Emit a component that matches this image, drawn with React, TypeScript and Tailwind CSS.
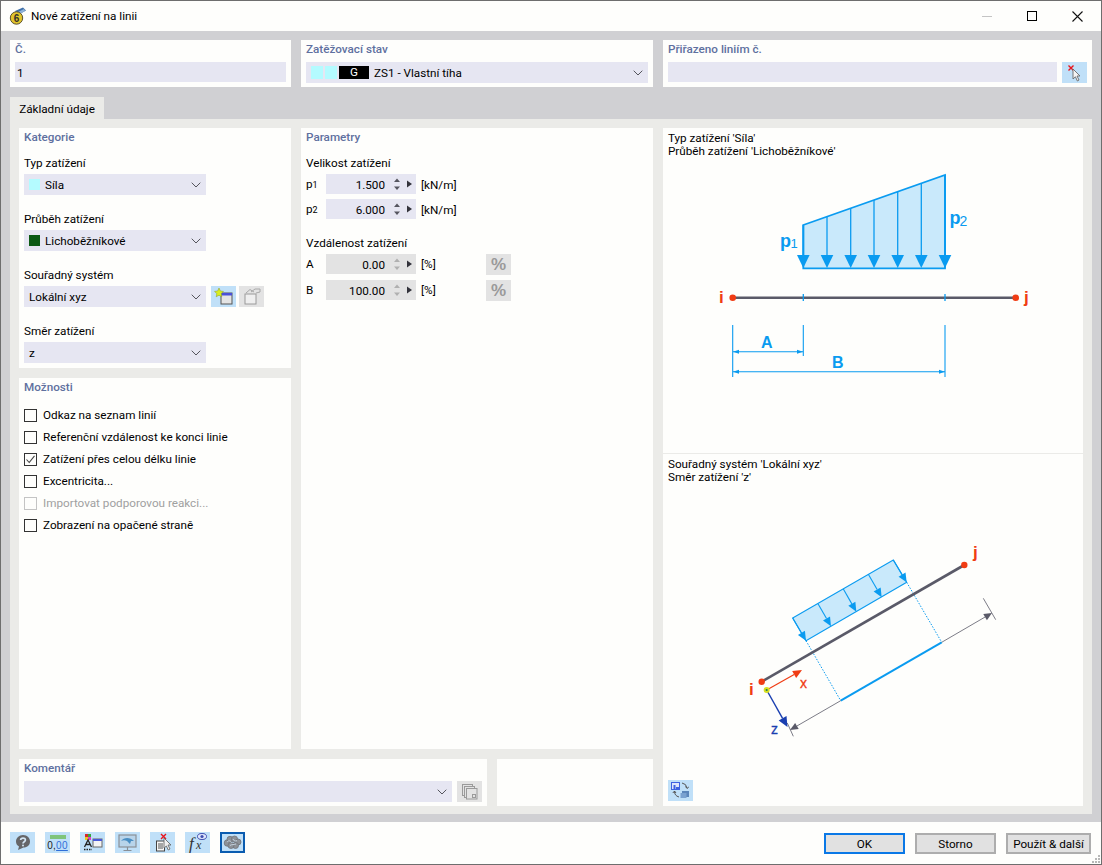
import React from "react";

const Chevron = () => (
  <svg width="10" height="6" viewBox="0 0 10 6" className="shrink-0">
    <polyline points="0.7,0.7 5,5 9.3,0.7" fill="none" stroke="#55555d" strokeWidth="1" />
  </svg>
);

const T = ({ children, className = "" }: { children: React.ReactNode; className?: string }) => (
  <span className={`pt-[2px] ${className}`}>{children}</span>
);

function Select({ w, children }: { w: string; children?: React.ReactNode }) {
  return (
    <div className={`${w} h-[21px] bg-[#e6e6f2] flex items-center pl-[5px] pr-[5px] text-black`}>
      <div className="flex items-center flex-1 min-w-0">{children}</div>
      <Chevron />
    </div>
  );
}

const Head = ({ children }: { children: React.ReactNode }) => (
  <div className="h-[18px] flex items-center pl-[5px] pt-[1px] font-medium text-[#5f709f]">{children}</div>
);

const Label = ({ children, className = "" }: { children: React.ReactNode; className?: string }) => (
  <div className={`h-[16px] flex items-center pt-[1px] text-black ${className}`}>{children}</div>
);

function Spin({ value, disabled }: { value: string; disabled?: boolean }) {
  const c = disabled ? "#b0b0b0" : "#55555f";
  return (
    <div className={`w-[90px] h-[20px] flex items-center ${disabled ? "bg-[#e3e3e3]" : "bg-[#e6e6f2]"}`}>
      <div className="w-[59px] pt-[2px] text-right text-black">{value}</div>
      <svg width="31" height="20" viewBox="0 0 31 20" className="shrink-0">
        <polygon points="12,4.5 15,8 9,8" fill={c} />
        <polygon points="12,16 15,12.5 9,12.5" fill={c} />
        <polygon points="22,6.5 22,13.5 27,10" fill="#33333b" />
      </svg>
    </div>
  );
}

const Pct = () => (
  <div className="w-[25px] h-[21px] bg-[#e3e3e3] flex items-center justify-center text-[#9a9a9a] text-[17px] font-bold leading-none font-['Liberation_Sans',sans-serif]">
    %
  </div>
);

function Check({ label, checked, disabled }: { label: string; checked?: boolean; disabled?: boolean }) {
  return (
    <div className="h-[22px] flex items-center">
      <div className={`w-[13px] h-[13px] border bg-[#fefefc] flex items-center justify-center ${disabled ? "border-[#c4c4c4]" : "border-[#333333]"}`}>
        {checked && (
          <svg width="11" height="11" viewBox="0 0 11 11">
            <polyline points="1.5,5.5 4.2,8.5 9.5,1.8" fill="none" stroke="#444" strokeWidth="1.1" />
          </svg>
        )}
      </div>
      <span className={`ml-[6px] pt-[1px] ${disabled ? "text-[#a0a0a0]" : "text-black"}`}>{label}</span>
    </div>
  );
}

const Tool = ({ children, active }: { children: React.ReactNode; active?: boolean }) => (
  <div className={`w-[25px] h-[21px] bg-[#c0e0f8] flex items-center justify-center ${active ? "border-2 border-[#0a5cb0]" : ""}`}>
    {children}
  </div>
);

const Btn = ({ children, primary }: { children: React.ReactNode; primary?: boolean }) => (
  <div className={`h-[21px] bg-[#e1e1e1] border-2 flex items-center justify-center pt-[1px] text-black ${primary ? "w-[81px] border-[#0a78e6]" : "border-[#adadad]"}`}>
    {children}
  </div>
);

const BLUE = "#0a9bf0";
const FILL = "#c9e9fb";
const RED = "#f03c14";
const GR = "#5a5a68";
const LBL = { fontFamily: "'Liberation Sans', sans-serif", fontWeight: 700 } as const;
const REG = { fontFamily: "'Liberation Sans', sans-serif" } as const;

function TopDiagram() {
  const xs = [803.3, 827, 850.7, 874, 897.7, 921.3, 945];
  const topY = (x: number) => 225 - ((x - 803.3) / 141.7) * 50;
  return (
    <svg width="420" height="293" viewBox="663 160 420 293">
      <polygon points="803.3,225 945,175 945,268.3 803.3,268.3" fill={FILL} stroke={BLUE} strokeWidth="1.8" />
      {xs.map((x) => (
        <g key={x}>
          <line x1={x} y1={topY(x)} x2={x} y2={257} stroke={BLUE} strokeWidth={x === 803.3 || x === 945 ? 1.8 : 1.3} />
          <polygon points={`${x - 6.3},255 ${x + 6.3},255 ${x},268`} fill={BLUE} />
        </g>
      ))}
      <text x="780" y="247" fontSize="18" fill={BLUE} style={LBL}>p</text>
      <text x="790.5" y="248" fontSize="13" fill={BLUE} style={REG}>1</text>
      <text x="949.5" y="224" fontSize="18" fill={BLUE} style={LBL}>p</text>
      <text x="959.5" y="226" fontSize="14" fill={BLUE} style={REG}>2</text>

      <line x1="732.7" y1="297.7" x2="1015.7" y2="297.7" stroke={GR} strokeWidth="2.4" />
      <line x1="803.3" y1="294" x2="803.3" y2="301" stroke={BLUE} strokeWidth="1.3" />
      <line x1="945" y1="294" x2="945" y2="301" stroke={BLUE} strokeWidth="1.3" />
      <circle cx="732.7" cy="297.7" r="3.3" fill={RED} />
      <circle cx="1015.7" cy="297.7" r="3.3" fill={RED} />
      <text x="719" y="303" fontSize="17" fill={RED} style={LBL}>i</text>
      <text x="1024" y="303" fontSize="17" fill={RED} style={LBL}>j</text>

      <g stroke={BLUE} strokeWidth="1.1">
        <line x1="732.7" y1="325" x2="732.7" y2="377" />
        <line x1="803.3" y1="325" x2="803.3" y2="356" />
        <line x1="945" y1="325" x2="945" y2="377" />
        <line x1="733" y1="351.7" x2="803" y2="351.7" />
        <line x1="733" y1="371.7" x2="945" y2="371.7" />
      </g>
      <g fill={BLUE}>
        <polygon points="733,351.7 739,349.7 739,353.7" />
        <polygon points="803,351.7 797,349.7 797,353.7" />
        <polygon points="733,371.7 739,369.7 739,373.7" />
        <polygon points="945,371.7 939,369.7 939,373.7" />
      </g>
      <text x="761" y="348" fontSize="16" fill={BLUE} style={LBL}>A</text>
      <text x="832" y="368" fontSize="16" fill={BLUE} style={LBL}>B</text>
    </svg>
  );
}

function Arrow({ x1, y1, x2, y2, c, w, s = 8 }: { x1: number; y1: number; x2: number; y2: number; c: string; w: number; s?: number }) {
  const a = Math.atan2(y2 - y1, x2 - x1);
  const bx = x2 - Math.cos(a) * s;
  const by = y2 - Math.sin(a) * s;
  const px = -Math.sin(a) * s * 0.45;
  const py = Math.cos(a) * s * 0.45;
  return (
    <g>
      <line x1={x1} y1={y1} x2={bx} y2={by} stroke={c} strokeWidth={w} />
      <polygon points={`${x2},${y2} ${bx + px},${by + py} ${bx - px},${by - py}`} fill={c} />
    </g>
  );
}

function BottomDiagram() {
  const P = (zx: number, zy: number) => [730 + zx / 3, 540 + zy / 3] as const;
  const arrows = [
    [188, 237, 228, 305],
    [264, 194, 303, 262],
    [340, 150, 379, 218],
    [415, 106, 455, 175],
    [490, 63, 530, 130],
  ];
  const [ox, oy] = P(110, 453);
  return (
    <svg width="420" height="285" viewBox="663 490 420 285">
      <polygon points="792.7,619 893.3,561 906.7,583.3 806,641.7" fill={FILL} stroke={BLUE} strokeWidth="1.1" />
      {arrows.map((a) => {
        const [x1, y1] = P(a[0], a[1]);
        const [x2, y2] = P(a[2], a[3]);
        return <Arrow key={a[0]} x1={x1} y1={y1} x2={x2} y2={y2} c={BLUE} w={1.1} s={9} />;
      })}
      <line x1="806" y1="641.7" x2="840.7" y2="701.7" stroke={BLUE} strokeWidth="1" strokeDasharray="1.5 1.5" />
      <line x1="906.7" y1="583.3" x2="941.7" y2="643.3" stroke={BLUE} strokeWidth="1" strokeDasharray="1.5 1.5" />
      <line x1="761.7" y1="682.7" x2="964.3" y2="566" stroke={GR} strokeWidth="2.6" />
      <circle cx="761.7" cy="682.7" r="3.2" fill={RED} />
      <circle cx="964.3" cy="566" r="3.2" fill={RED} />
      <line x1="840.7" y1="701.7" x2="941.7" y2="643.3" stroke={BLUE} strokeWidth="2" />
      <Arrow x1={840.7} y1={701.7} x2={790} y2={731} c={GR} w={0.8} s={8} />
      <Arrow x1={941.7} y1={643.3} x2={992} y2={614} c={GR} w={0.8} s={8} />
      <line x1="983.3" y1="599.3" x2="995.7" y2="620.7" stroke={GR} strokeWidth="0.8" />
      <line x1="787.3" y1="724" x2="793.3" y2="737.3" stroke={GR} strokeWidth="0.8" />
      <Arrow x1={ox} y1={oy} x2={802} y2={671} c={RED} w={1.2} s={9} />
      <Arrow x1={ox} y1={oy} x2={787.5} y2={728} c="#1a3fb0" w={1.4} s={10} />
      <circle cx={ox} cy={oy} r="3" fill="#d8e020" />
      <circle cx={ox} cy={oy} r="1.1" fill="#1f7f4f" />
      <text x="749" y="696" fontSize="17" fill={RED} style={LBL}>i</text>
      <text x="973" y="559" fontSize="17" fill={RED} style={LBL}>j</text>
      <text x="800" y="689" fontSize="14" fill={RED} style={{ ...REG, fontWeight: 400 }} stroke={RED} strokeWidth="0.3">x</text>
      <text x="771" y="735" fontSize="14" fill="#1a3fb0" style={{ ...REG, fontWeight: 400 }} stroke="#1a3fb0" strokeWidth="0.3">z</text>
    </svg>
  );
}

export default function App() {
  return (
    <div className="w-[1102px] h-[865px] box-border border border-[#6e6e6e] bg-[#fefefc] flex flex-col text-[11.7px] leading-[13px] font-['Roboto','Noto_Sans',sans-serif] overflow-hidden">
      {/* title bar */}
      <div className="h-[30px] flex items-center pl-[8px] pr-[18px] shrink-0">
        <svg width="18" height="18" viewBox="0 0 18 18" className="shrink-0">
          <polygon points="6,4 14,0.5 17,3.5 9,8" fill="#3f6fa8" />
          <polygon points="7,6 15,2 16,4 9,8" fill="#8fb2d8" />
          <circle cx="7.5" cy="11" r="6.2" fill="#e2c52c" stroke="#5b5230" strokeWidth="1" />
          <text x="7.5" y="14.5" fontSize="10" fontWeight="700" textAnchor="middle" fill="#33302a" style={REG}>6</text>
        </svg>
        <span className="ml-[4px] pt-[1px] text-black">Nové zatížení na linii</span>
        <div className="ml-auto flex items-center gap-[35px]">
          <div className="w-[10px] h-[1px] bg-[#c4c4c4]" />
          <div className="w-[10px] h-[10px] border border-black" />
          <svg width="11" height="11" viewBox="0 0 11 11">
            <path d="M0.5 0.5 L10.5 10.5 M10.5 0.5 L0.5 10.5" stroke="#111" strokeWidth="1.1" />
          </svg>
        </div>
      </div>

      {/* main */}
      <div className="flex-1 bg-[#d0d0d3] px-[9px] pt-[9px] pb-[8px] flex flex-col">
        <div className="flex gap-[10px] h-[47px] shrink-0">
          <div className="w-[281px] bg-[#fefefc] px-[5px]">
            <div className="h-[18px] flex items-center pt-[1px] font-medium text-[#5f709f]">Č.</div>
            <div className="mt-[4px] h-[20px] bg-[#e6e6f2] flex items-center pl-[2px] pt-[2px] text-black">1</div>
          </div>
          <div className="w-[352px] bg-[#fefefc] px-[5px]">
            <div className="h-[18px] flex items-center pt-[1px] font-medium text-[#5f709f]">Zatěžovací stav</div>
            <div className="mt-[4px]">
              <Select w="w-[342px]">
                <span className="w-[12px] h-[13px] bg-[#b4fbff]" />
                <span className="ml-[2px] w-[12px] h-[13px] bg-[#b4fbff]" />
                <span className="ml-[2px] w-[30px] h-[13px] bg-black text-white flex items-center justify-center">G</span>
                <T className="ml-[5px]">ZS1 - Vlastní tíha</T>
              </Select>
            </div>
          </div>
          <div className="w-[429px] bg-[#fefefc] px-[5px]">
            <div className="h-[18px] flex items-center pt-[1px] font-medium text-[#5f709f]">Přiřazeno liniím č.</div>
            <div className="mt-[4px] flex gap-[5px] items-start">
              <div className="w-[389px] h-[20px] bg-[#e6e6f2]" />
              <div className="w-[25px] h-[21px] bg-[#c0e0f8] flex items-center justify-center">
                <svg width="20" height="18" viewBox="0 0 20 18">
                  <path d="M3.5 1.5 L8.5 6.5 M8.5 1.5 L3.5 6.5" stroke="#e8141c" strokeWidth="1.4" />
                  <polygon points="8,5 8,15 10.4,12.8 12.4,17 14,16 12,12 15,12" fill="#f4f4f4" stroke="#6a6a6a" strokeWidth="0.9" />
                </svg>
              </div>
            </div>
          </div>
        </div>

        <div className="mt-[10px] w-[94px] h-[22px] bg-[#ebebe8] flex items-center justify-center pt-[2px] text-black shrink-0">Základní údaje</div>

        <div className="flex-1 bg-[#ebebe8] pl-[9px] pr-[9px] pt-[9px] pb-[8px] flex gap-[10px] min-h-0">
          <div className="w-[634px] flex flex-col gap-[10px]">
            <div className="h-[621px] flex gap-[10px]">
              <div className="w-[272px] flex flex-col gap-[10px]">
                <div className="h-[240px] bg-[#fefefc]">
                  <Head>Kategorie</Head>
                  <div className="pl-[5px] pt-[9px]">
                    <Label>Typ zatížení</Label>
                    <div className="mt-[3px]">
                      <Select w="w-[182px]">
                        <span className="w-[11px] h-[11px] bg-[#b4fbff]" />
                        <T className="ml-[5px]">Síla</T>
                      </Select>
                    </div>
                    <Label className="mt-[16px]">Průběh zatížení</Label>
                    <div className="mt-[3px]">
                      <Select w="w-[182px]">
                        <span className="w-[11px] h-[11px] bg-[#0c5a14]" />
                        <T className="ml-[5px]">Lichoběžníkové</T>
                      </Select>
                    </div>
                    <Label className="mt-[16px]">Souřadný systém</Label>
                    <div className="mt-[3px] flex items-center">
                      <Select w="w-[182px]"><T>Lokální xyz</T></Select>
                      <div className="ml-[5px] w-[25px] h-[21px] bg-[#c0e0f8] flex items-center justify-center">
                        <svg width="21" height="19" viewBox="0 0 21 19">
                          <rect x="8" y="6" width="11" height="11" fill="#e4e4e4" stroke="#555" />
                          <rect x="8" y="6" width="11" height="2.5" fill="#4a50d8" />
                          <polygon points="6,1 7.4,4 10.5,4.4 8.2,6.6 8.8,9.8 6,8.2 3.2,9.8 3.8,6.6 1.5,4.4 4.6,4" fill="#d8ee20" stroke="#8a9a20" strokeWidth="0.5" />
                        </svg>
                      </div>
                      <div className="ml-[3px] w-[25px] h-[21px] bg-[#e3e3e3] flex items-center justify-center">
                        <svg width="21" height="19" viewBox="0 0 21 19">
                          <rect x="4" y="7" width="11" height="10" fill="#efefef" stroke="#9a9a9a" />
                          <path d="M5 6 L9 2.5 L13 5 M10 5 L14 2 L19 2 L19 5 L15 6" fill="none" stroke="#a8a8a8" strokeWidth="1" />
                        </svg>
                      </div>
                    </div>
                    <Label className="mt-[16px]">Směr zatížení</Label>
                    <div className="mt-[3px]">
                      <Select w="w-[182px]"><T>z</T></Select>
                    </div>
                  </div>
                </div>
                <div className="flex-1 bg-[#fefefc]">
                  <Head>Možnosti</Head>
                  <div className="pl-[5px] mt-[8px]">
                    <Check label="Odkaz na seznam linií" />
                    <Check label="Referenční vzdálenost ke konci linie" />
                    <Check label="Zatížení přes celou délku linie" checked />
                    <Check label="Excentricita..." />
                    <Check label="Importovat podporovou reakci..." disabled />
                    <Check label="Zobrazení na opačené straně" />
                  </div>
                </div>
              </div>

              <div className="w-[352px] bg-[#fefefc]">
                <Head>Parametry</Head>
                <div className="pl-[5px] pt-[9px]">
                  <Label>Velikost zatížení</Label>
                  <div className="mt-[3px] flex items-center">
                    <span className="w-[20px] pt-[2px] text-black">p<span className="text-[9px]">1</span></span>
                    <Spin value="1.500" />
                    <span className="ml-[5px] pt-[2px] text-black">[kN/m]</span>
                  </div>
                  <div className="mt-[5px] flex items-center">
                    <span className="w-[20px] pt-[2px] text-black">p<span className="text-[9px]">2</span></span>
                    <Spin value="6.000" />
                    <span className="ml-[5px] pt-[2px] text-black">[kN/m]</span>
                  </div>
                  <Label className="mt-[16px]">Vzdálenost zatížení</Label>
                  <div className="mt-[3px] flex items-start">
                    <span className="w-[20px] h-[20px] flex items-center pt-[1px] text-black">A</span>
                    <Spin value="0.00" disabled />
                    <span className="ml-[5px] w-[65px] h-[20px] flex items-center pt-[1px] text-black">[%]</span>
                    <Pct />
                  </div>
                  <div className="mt-[5px] flex items-start">
                    <span className="w-[20px] h-[20px] flex items-center pt-[1px] text-black">B</span>
                    <Spin value="100.00" disabled />
                    <span className="ml-[5px] w-[65px] h-[20px] flex items-center pt-[1px] text-black">[%]</span>
                    <Pct />
                  </div>
                </div>
              </div>
            </div>

            <div className="flex-1 flex gap-[10px]">
              <div className="w-[468px] bg-[#fefefc]">
                <div className="h-[18px] flex items-center pl-[5px] pt-[1px] font-medium text-[#5f709f]">Komentář</div>
                <div className="mt-[4px] pl-[5px] flex items-center gap-[5px]">
                  <Select w="w-[428px]" />
                  <div className="w-[25px] h-[21px] bg-[#e3e3e3] flex items-center justify-center">
                    <svg width="17" height="17" viewBox="0 0 17 17">
                      <rect x="1.5" y="1.5" width="10" height="11" fill="none" stroke="#9a9a9a" />
                      <rect x="3.5" y="3.5" width="10" height="11" fill="#e3e3e3" stroke="#9a9a9a" />
                      <rect x="5.5" y="5.5" width="10.5" height="10.5" fill="#e3e3e3" stroke="#9a9a9a" />
                      <rect x="11.5" y="11.5" width="3" height="3" fill="none" stroke="#9a9a9a" />
                    </svg>
                  </div>
                </div>
              </div>
              <div className="w-[156px] bg-[#fefefc]" />
            </div>
          </div>

          <div className="w-[420px] bg-[#fefefc] flex flex-col">
            <div className="h-[326px] border-b border-[#ebebe8] shrink-0">
              <div className="pl-[5px] pt-[4px] h-[32px] text-black">
                <div>Typ zatížení 'Síla'</div>
                <div>Průběh zatížení 'Lichoběžníkové'</div>
              </div>
              <TopDiagram />
            </div>
            <div className="flex-1">
              <div className="pl-[5px] pt-[4px] h-[35px] text-black">
                <div>Souřadný systém 'Lokální xyz'</div>
                <div>Směr zatížení 'z'</div>
              </div>
              <BottomDiagram />
              <div className="ml-[5px] mt-[6px] w-[25px] h-[21px] bg-[#c0e0f8] flex items-center justify-center">
                <svg width="19" height="17" viewBox="0 0 19 17">
                  <rect x="0.5" y="0.5" width="8" height="7" fill="#dfe6fb" stroke="#3f62e0" />
                  <rect x="2.5" y="3" width="2" height="4" fill="#3f62e0" />
                  <rect x="5" y="5" width="3" height="2" fill="#3f62e0" />
                  <path d="M11 1 A6 6 0 0 1 16 6 M14.5 4.5 L16 6.5 L17.8 5 M8 15 A6 6 0 0 1 3.5 9 M1.8 11 L3.5 9 L5 11" fill="none" stroke="#555" strokeWidth="1" />
                  <rect x="11" y="9" width="7" height="6" fill="#5b86bb" />
                  <rect x="9.5" y="11" width="6" height="5" fill="#7aa2d0" />
                </svg>
              </div>
            </div>
          </div>
        </div>
      </div>

      {/* footer */}
      <div className="h-[42px] shrink-0 flex pl-[9px] pr-[10px] relative">
        <div className="flex gap-[10px] pt-[10px]">
          <Tool>
            <svg width="17" height="17" viewBox="0 0 17 17">
              <path d="M9 1 C13.5 1 16 4 16 7.5 C16 11 13.5 13.5 9.5 13.5 L4 16 L5 12.5 C3 11.5 2 9.5 2 7.5 C2 4 5 1 9 1 Z" fill="#666668" />
              <path d="M6.6 6 C6.8 3.4 11.4 3.4 11.4 5.9 C11.4 7.8 9 7.6 9 9.6" fill="none" stroke="#d4e6f4" strokeWidth="1.7" />
              <circle cx="9" cy="11.4" r="1" fill="#d4e6f4" />
            </svg>
          </Tool>
          <Tool>
            <div className="w-[21px] flex flex-col items-center">
              <div className="w-[16px] h-[4px] bg-[#7fc47a] mb-[1px]" />
              <div className="text-[10px] leading-[11px] font-['Liberation_Sans',sans-serif] tracking-[0.3px] text-[#222]">
                0,<span className="text-[#2f6fd8] underline">00</span>
              </div>
            </div>
          </Tool>
          <Tool>
            <svg width="21" height="19" viewBox="0 0 21 19">
              <rect x="3" y="1" width="3" height="3" fill="#d8262c" />
              <rect x="6" y="1" width="3" height="3" fill="#38a838" />
              <rect x="3" y="4" width="3" height="3" fill="#e8c820" />
              <rect x="6" y="4" width="3" height="3" fill="#d83cc8" />
              <path d="M2.5 14 L6 7 L9.5 14 M4 11.5 L8 11.5" fill="none" stroke="#222" strokeWidth="1.3" />
              <path d="M2 16.5 H10" stroke="#222" strokeWidth="1.4" strokeDasharray="1.5 1" />
              <rect x="11" y="6" width="9" height="8" fill="#f4f4f4" stroke="#666" />
              <rect x="11" y="6" width="9" height="2" fill="#4a5ad8" />
            </svg>
          </Tool>
          <Tool>
            <svg width="21" height="19" viewBox="0 0 21 19">
              <rect x="2" y="2" width="17" height="12" fill="#b8d4ea" stroke="#8a8f96" strokeWidth="1.2" />
              <path d="M4 8 C7 4 13 4 17 8 L14 8 L13 11 L10 8 C8 7 6 7 4 8 Z" fill="#4a8fc4" />
              <path d="M10.5 14 V17 M6.5 17.5 H14.5" stroke="#8a8f96" strokeWidth="1.2" />
            </svg>
          </Tool>
          <Tool>
            <svg width="21" height="19" viewBox="0 0 21 19">
              <path d="M9 1 L14 6 M14 1 L9 6" stroke="#e8141c" strokeWidth="1.4" />
              <rect x="4.5" y="8" width="8" height="10" fill="#f6f6f6" stroke="#444" />
              <path d="M6 11 H11 M6 13 H11 M6 15 H11" stroke="#444" strokeWidth="0.9" />
              <polygon points="12,5 12,15 14.4,13 16.2,17 18,16 16,12 19,12" fill="#f0f0f0" stroke="#6a6a6a" strokeWidth="0.9" />
            </svg>
          </Tool>
          <Tool>
            <div className="relative w-[21px] h-[19px]">
              <span className="absolute left-[2px] top-[2px] italic text-[17px] leading-[17px] font-['Liberation_Serif',serif] text-[#333]">f</span>
              <span className="absolute left-[9px] top-[6px] italic text-[12px] leading-[12px] font-['Liberation_Serif',serif] text-[#333]">x</span>
              <svg width="10" height="7" viewBox="0 0 10 7" className="absolute right-[1px] top-0">
                <ellipse cx="5" cy="3.5" rx="4.5" ry="3" fill="#dfe6fb" stroke="#3f4fb0" />
                <circle cx="5" cy="3.5" r="1.6" fill="#3f4fb0" />
              </svg>
            </div>
          </Tool>
          <Tool active>
            <svg width="19" height="15" viewBox="0 0 19 15">
              <g fill="#8d9298" stroke="#6e7278" strokeWidth="0.8">
                <circle cx="4.5" cy="8" r="3.3" />
                <circle cx="7" cy="4.3" r="3" />
                <circle cx="11.5" cy="4" r="3" />
                <circle cx="15" cy="7" r="3" />
                <circle cx="12.5" cy="10.5" r="3" />
                <circle cx="8" cy="10.5" r="3" />
              </g>
              <path d="M4 7 C6 5 8 6 8.5 8 M10 4 C10.5 6 13 6.5 14 5.5 M7 10.5 C9 9 11 10 13 9" fill="none" stroke="#c8d8e4" strokeWidth="0.9" />
            </svg>
          </Tool>
        </div>
        <div className="ml-auto flex gap-[10px] pt-[11px] items-start">
          <Btn primary>OK</Btn>
          <div className="w-[81px]"><Btn>Storno</Btn></div>
          <div className="w-[85px]"><Btn>Použít &amp; další</Btn></div>
        </div>
        <svg width="10" height="10" viewBox="0 0 10 10" className="absolute right-0 bottom-0">
          <g fill="#b8b8b8">
            <rect x="7" y="1" width="2" height="2" />
            <rect x="4" y="4" width="2" height="2" />
            <rect x="7" y="4" width="2" height="2" />
            <rect x="1" y="7" width="2" height="2" />
            <rect x="4" y="7" width="2" height="2" />
            <rect x="7" y="7" width="2" height="2" />
          </g>
        </svg>
      </div>
    </div>
  );
}
